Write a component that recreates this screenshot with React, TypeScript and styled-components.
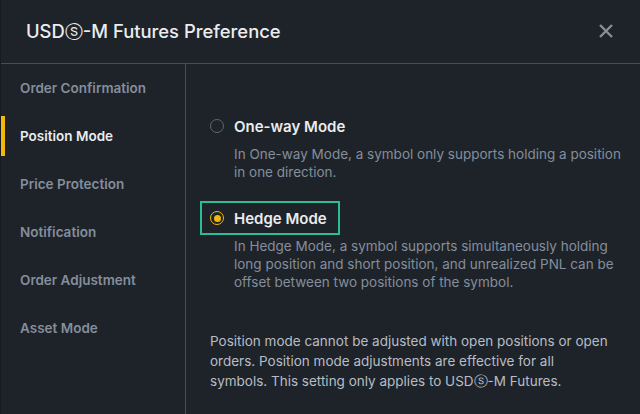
import React, { useState } from "react";
import styled, { createGlobalStyle } from "styled-components";

const Global = createGlobalStyle`
  html, body { margin: 0; padding: 0; background: #1e2329; }
  body { font-family: Inter, "Noto Sans", "DejaVu Sans", sans-serif; -webkit-font-smoothing: antialiased; }
  * { box-sizing: border-box; }
`;

const Modal = styled.div`
  width: 640px;
  height: 414px;
  background: #1e2329;
  display: flex;
  flex-direction: column;
  border-left: 1px solid #181a20;
`;

const Header = styled.div`
  height: 64px;
  flex: none;
  display: flex;
  align-items: center;
  justify-content: space-between;
  padding: 0 24px 1px 25px;
  border-bottom: 1px solid #474d57;
`;

const Title = styled.h1`
  margin: 0;
  font-size: 18.4px;
  font-weight: 500;
  color: #eaecef;
`;

const Close = styled.button`
  width: 20px;
  height: 20px;
  border: 0;
  padding: 0;
  background: none;
  color: #848e9c;
  display: flex;
  align-items: center;
  justify-content: center;
  cursor: pointer;
`;

const Body = styled.div`
  flex: 1;
  display: flex;
  min-height: 0;
`;

const Sidebar = styled.nav`
  width: 185px;
  flex: none;
  border-right: 1px solid #474d57;
  padding-top: 4px;
  display: flex;
  flex-direction: column;
  gap: 8px;
`;

const NavItem = styled.div<{ $active?: boolean }>`
  position: relative;
  height: 40px;
  display: flex;
  align-items: center;
  padding-left: 19px;
  font-size: 13.5px;
  font-weight: 600;
  color: ${(p) => (p.$active ? "#eaecef" : "#848e9c")};
  &::before {
    content: "";
    position: absolute;
    left: 0;
    top: 0;
    bottom: 0;
    width: 4px;
    background: ${(p) => (p.$active ? "#f0b90b" : "transparent")};
  }
`;

const Main = styled.div`
  flex: 1;
  padding: 45px 16px 0 14px;
  display: flex;
  flex-direction: column;
`;

const Option = styled.div`
  display: flex;
  flex-direction: column;
  align-items: flex-start;
  margin-bottom: 20px;
`;

const OptionLabel = styled.div<{ $focused?: boolean }>`
  height: 34px;
  display: flex;
  align-items: center;
  gap: 10px;
  padding: 0 11px 0 8px;
  border: 2px solid ${(p) => (p.$focused ? "#2dbd96" : "transparent")};
  font-size: 15px;
  font-weight: 600;
  color: #eaecef;
  cursor: pointer;
`;

const Radio = styled.span<{ $checked?: boolean }>`
  width: 14px;
  height: 14px;
  border-radius: 50%;
  border: ${(p) => (p.$checked ? "1.5px solid #f0b90b" : "1px solid #5e6673")};
  display: flex;
  align-items: center;
  justify-content: center;
  &::after {
    content: "";
    width: 7px;
    height: 7px;
    border-radius: 50%;
    background: ${(p) => (p.$checked ? "#f0b90b" : "transparent")};
  }
`;

const Desc = styled.p`
  margin: 2px 0 0 34px;
  font-size: 13.5px;
  line-height: 18px;
  color: #848e9c;
`;

const Note = styled.p`
  margin: 20px 13px 0 10px;
  font-size: 13.5px;
  line-height: 20px;
  color: #b7bdc6;
`;

const navItems = [
  "Order Confirmation",
  "Position Mode",
  "Price Protection",
  "Notification",
  "Order Adjustment",
  "Asset Mode",
];

export default function App() {
  const [mode, setMode] = useState<"one" | "hedge">("hedge");
  return (
    <>
      <Global />
      <Modal>
        <Header>
          <Title>USDⓢ-M Futures Preference</Title>
          <Close aria-label="close">
            <svg width="16" height="16" viewBox="0 0 16 16">
              <path d="M2 2 L14 14 M14 2 L2 14" stroke="currentColor" strokeWidth="2.4" strokeLinecap="butt" />
            </svg>
          </Close>
        </Header>
        <Body>
          <Sidebar>
            {navItems.map((n) => (
              <NavItem key={n} $active={n === "Position Mode"}>
                {n}
              </NavItem>
            ))}
          </Sidebar>
          <Main>
            <Option>
              <OptionLabel onClick={() => setMode("one")}>
                <Radio $checked={mode === "one"} />
                One-way Mode
              </OptionLabel>
              <Desc>
                In One-way Mode, a symbol only supports holding a position in one direction.
              </Desc>
            </Option>
            <Option>
              <OptionLabel $focused onClick={() => setMode("hedge")}>
                <Radio $checked={mode === "hedge"} />
                Hedge Mode
              </OptionLabel>
              <Desc>
                In Hedge Mode, a symbol supports simultaneously holding long position and short
                position, and unrealized PNL can be offset between two positions of the symbol.
              </Desc>
            </Option>
            <Note>
              Position mode cannot be adjusted with open positions or open orders. Position mode
              adjustments are effective for all symbols. This setting only applies to USDⓢ-M
              Futures.
            </Note>
          </Main>
        </Body>
      </Modal>
    </>
  );
}
